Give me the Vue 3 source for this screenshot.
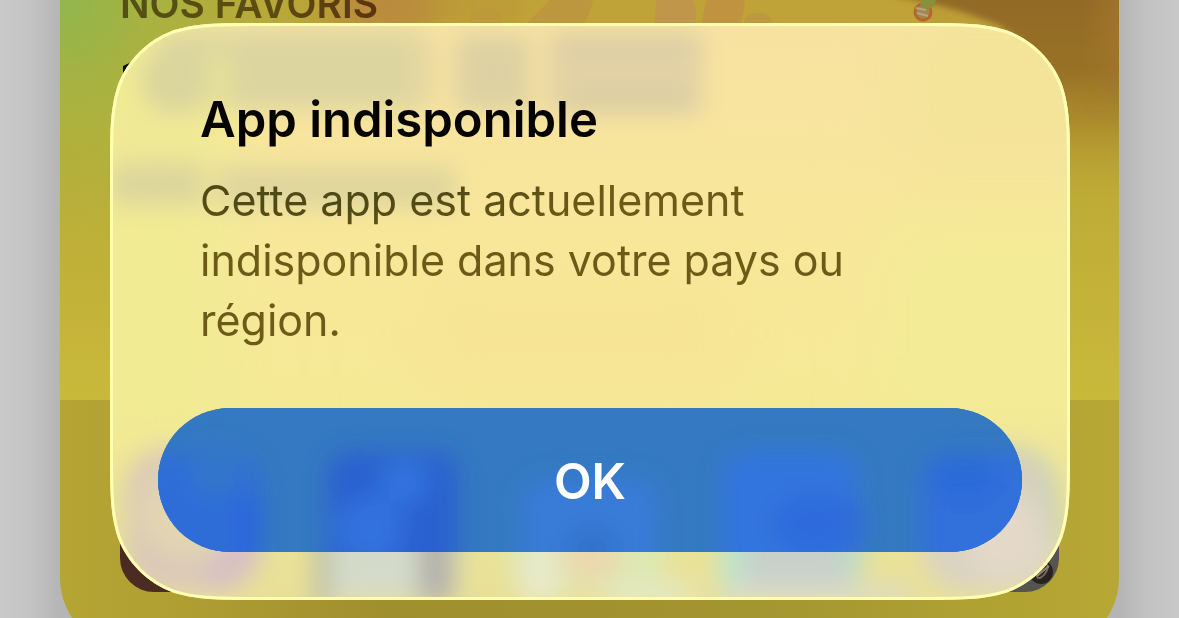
<template>
  <main class="screen">
    <section class="card">
      <div class="hero">
        <svg class="hero-art" viewBox="0 0 1059 400" preserveAspectRatio="none" aria-hidden="true">
          <defs>
            <linearGradient id="heroBase" x1="0" y1="0" x2="0" y2="1">
              <stop offset="0" stop-color="#bc9d37" />
              <stop offset="0.4" stop-color="#bda936" />
              <stop offset="1" stop-color="#c9b93b" />
            </linearGradient>
            <radialGradient id="heroGreen" gradientUnits="userSpaceOnUse" cx="0" cy="0" r="330">
              <stop offset="0" stop-color="#90b64e" />
              <stop offset="0.3" stop-color="#a7b441" stop-opacity="0.9" />
              <stop offset="1" stop-color="#bdb437" stop-opacity="0" />
            </radialGradient>
            <linearGradient id="heroDark" gradientUnits="userSpaceOnUse" x1="0" y1="0" x2="0" y2="200">
              <stop offset="0" stop-color="#926a26" />
              <stop offset="0.35" stop-color="#987128" />
              <stop offset="0.6" stop-color="#a68429" stop-opacity="0.8" />
              <stop offset="1" stop-color="#bba434" stop-opacity="0" />
            </linearGradient>
            <filter id="soft" x="-50%" y="-50%" width="200%" height="200%">
              <feGaussianBlur stdDeviation="16" />
            </filter>
            <filter id="edge" x="-30%" y="-30%" width="160%" height="160%">
              <feGaussianBlur stdDeviation="3" />
            </filter>
          </defs>
          <rect width="1059" height="400" fill="url(#heroBase)" />
          <rect width="420" height="400" fill="url(#heroGreen)" />
          <ellipse cx="325" cy="6" rx="56" ry="30" fill="#b98a3c" filter="url(#soft)" />
          <path d="M460 -10H860V30H460Z" fill="#bfa238" filter="url(#edge)" />
          <path d="M500 -10L533 -6Q534 12 518 30H460Z" fill="#bd973e" />
          <path d="M597 -6H630Q638 10 636 30H594Z" fill="#c0964a" />
          <path d="M648 -6H684Q686 14 678 30H640Z" fill="#bf933f" />
          <ellipse cx="698" cy="22" rx="14" ry="9" fill="#be983f" />
          <ellipse cx="426" cy="18" rx="16" ry="10" fill="#bd9939" />
          <path d="M836 -4Q900 8 940 26L960 40V200H1080V-20H850Z" fill="url(#heroDark)" filter="url(#edge)" />
          <ellipse cx="1064" cy="30" rx="20" ry="60" fill="#a47629" filter="url(#soft)" />
          <ellipse cx="863" cy="12" rx="8" ry="8" fill="#a08a48" stroke="#b9652e" stroke-width="3" />
          <path d="M863 -4H877L874 6Q868 12 860 6Z" fill="#88903a" />
          <path d="M857 13L868 16M856 8L866 10" stroke="#b9a18a" stroke-width="2" />
          <path d="M63 66L80 58V90H63Z" fill="#090700" />
        </svg>
        <p class="eyebrow">NOS FAVORIS</p>
      </div>
      <div class="shelf">
        <span v-for="name in apps" :key="name" class="app-icon" :class="name">
          <svg v-if="name === 'wheel'" viewBox="0 0 144 144" aria-hidden="true">
            <circle cx="126" cy="124" r="12" fill="#29231f" />
            <ellipse cx="127" cy="123" rx="4" ry="8" fill="none" stroke="#75675c" stroke-width="2" transform="rotate(35 127 123)" />
            <path d="M122 128L134 118" stroke="#91837a" stroke-width="2" />
          </svg>
        </span>
      </div>
    </section>

    <section class="alert" role="alertdialog" aria-labelledby="alert-title" aria-describedby="alert-text">
      <svg class="glass" viewBox="0 0 960 577" preserveAspectRatio="none" aria-hidden="true">
        <defs>
          <linearGradient id="glassBase" x1="0" y1="0" x2="0" y2="1">
            <stop offset="0" stop-color="#f8e2a2" />
            <stop offset="0.35" stop-color="#f8e79a" />
            <stop offset="0.65" stop-color="#f5e996" />
            <stop offset="0.8" stop-color="#ebe596" />
            <stop offset="1" stop-color="#e8e098" />
          </linearGradient>
          <filter id="blurBig" x="-50%" y="-50%" width="200%" height="200%">
            <feGaussianBlur stdDeviation="32" />
          </filter>
          <filter id="blurMid" x="-30%" y="-50%" width="160%" height="200%">
            <feGaussianBlur stdDeviation="12" />
          </filter>
          <clipPath id="glassClip">
            <path :d="shape" />
          </clipPath>
        </defs>
        <g clip-path="url(#glassClip)">
          <rect width="960" height="577" fill="url(#glassBase)" />
          <g filter="url(#blurBig)">
            <rect x="-80" y="-20" width="200" height="440" fill="#f1eb94" />
            <rect x="780" y="200" width="260" height="200" fill="#f3eb96" />
            <rect x="780" y="-30" width="240" height="190" fill="#f4e49a" />
            <rect x="300" y="250" width="330" height="120" fill="#f7e595" />
          </g>
          <g filter="url(#blurMid)">
            <rect x="50" y="8" width="260" height="78" fill="#dcd5a0" />
            <circle cx="64" cy="58" r="34" fill="#d9d59d" />
            <path d="M8 84Q30 142 92 122" fill="none" stroke="#efe996" stroke-width="32" />
            <path d="M104 30Q118 60 100 94" fill="none" stroke="#e8e397" stroke-width="20" />
            <rect x="300" y="14" width="24" height="70" fill="#e4d7a1" />
            <rect x="346" y="12" width="74" height="76" fill="#ddd1a3" />
            <rect x="438" y="12" width="154" height="78" fill="#e2d2a5" />
            <rect x="0" y="140" width="94" height="42" fill="#dbd59d" />
            <rect x="106" y="144" width="240" height="40" fill="#ded59e" />
            <rect x="445" y="14" width="145" height="10" fill="#d0c6a6" />
            <rect x="455" y="72" width="130" height="16" fill="#d6cba3" />
          </g>
          <g filter="url(#blurMid)">
            <rect x="16" y="426" width="136" height="142" rx="40" fill="#dac8b9" />
            <circle cx="76" cy="490" r="46" fill="#e2d5b2" />
            <path d="M144 460Q150 520 100 564" fill="none" stroke="#d4bbcb" stroke-width="18" />
            <rect x="206" y="426" width="142" height="150" rx="24" fill="#d4dac9" />
            <path d="M326 430V580" stroke="#b3b1aa" stroke-width="34" />
            <path d="M212 500V590" stroke="#bcbda2" stroke-width="16" />
            <rect x="400" y="430" width="154" height="140" rx="24" fill="#dce8b2" />
            <ellipse cx="430" cy="550" rx="20" ry="36" fill="#e7eacb" />
            <ellipse cx="480" cy="530" rx="32" ry="34" fill="#ebd9ac" />
            <ellipse cx="540" cy="572" rx="50" ry="14" fill="#e5e9c2" />
            <rect x="612" y="426" width="140" height="142" rx="30" fill="#c8d0ca" />
            <path d="M622 490V564" stroke="#b9e6cf" stroke-width="22" />
            <path d="M752 490L738 556" stroke="#bbdbca" stroke-width="20" />
            <rect x="610" y="562" width="190" height="20" fill="#dddcc6" />
            <rect x="812" y="424" width="136" height="144" rx="44" fill="#dad3c2" />
            <ellipse cx="896" cy="516" rx="40" ry="40" fill="#e4d9c9" />
            <path d="M900 430Q944 440 944 520" fill="none" stroke="#c9d0ba" stroke-width="18" />
          </g>
          <path :d="shape" fill="none" stroke="#fffeb2" stroke-width="6" />
        </g>
      </svg>

      <div class="copy">
        <h1 id="alert-title">App indisponible</h1>
        <p id="alert-text">Cette app est actuellement indisponible dans votre pays ou région.</p>
      </div>
      <button class="ok" type="button">
        <svg class="ok-tint" viewBox="0 0 864 144" preserveAspectRatio="none" aria-hidden="true">
          <rect width="864" height="144" fill="#3479c1" />
          <g filter="url(#blurMid)">
            <rect x="-30" y="46" width="132" height="130" rx="30" fill="#2d6dd8" />
            <circle cx="58" cy="62" r="26" fill="#3376cb" />
            <path d="M92 90V150" stroke="#2a62e0" stroke-width="18" />
            <rect x="170" y="44" width="130" height="130" rx="20" fill="#2961cf" />
            <ellipse cx="246" cy="74" rx="24" ry="22" fill="#3274e0" />
            <ellipse cx="212" cy="122" rx="34" ry="34" fill="#3172de" />
            <rect x="364" y="70" width="136" height="110" rx="24" fill="#377cd8" />
            <ellipse cx="434" cy="140" rx="26" ry="20" fill="#3172c8" />
            <rect x="564" y="44" width="136" height="130" rx="24" fill="#3275de" />
            <ellipse cx="660" cy="116" rx="46" ry="30" fill="#2e6adc" />
            <rect x="764" y="46" width="140" height="130" rx="24" fill="#3070dc" />
            <ellipse cx="806" cy="70" rx="34" ry="24" fill="#2c6ad8" />
          </g>
        </svg>
        <span class="ok-label">OK</span>
      </button>
    </section>
  </main>
</template>

<script setup>
const apps = ["brown", "slate", "lime", "aqua", "wheel"];

// continuous rounded corners for the glass panel
function smoothRect(w, h, r) {
  const a = 1.5287 * r;
  const b = 1.0885 * r;
  const c = 0.8684 * r;
  const d = 0.6315 * r;
  const e = 0.0749 * r;
  const f = 0.3728 * r;
  const g = 0.1691 * r;
  return [
    `M${a} 0H${w - a}`,
    `C${w - b} 0 ${w - c} 0 ${w - d} ${e}`,
    `C${w - f} ${g} ${w - g} ${f} ${w - e} ${d}`,
    `C${w} ${c} ${w} ${b} ${w} ${a}`,
    `V${h - a}`,
    `C${w} ${h - b} ${w} ${h - c} ${w - e} ${h - d}`,
    `C${w - g} ${h - f} ${w - f} ${h - g} ${w - d} ${h - e}`,
    `C${w - c} ${h} ${w - b} ${h} ${w - a} ${h}`,
    `H${a}`,
    `C${b} ${h} ${c} ${h} ${d} ${h - e}`,
    `C${f} ${h - g} ${g} ${h - f} ${e} ${h - d}`,
    `C0 ${h - c} 0 ${h - b} 0 ${h - a}`,
    `V${a}`,
    `C0 ${b} 0 ${c} ${e} ${d}`,
    `C${g} ${f} ${f} ${g} ${d} ${e}`,
    `C${c} 0 ${b} 0 ${a} 0Z`,
  ].join("");
}

const shape = smoothRect(960, 577, 100);
</script>

<style>
body {
  background: #c8c8c8;
}
</style>

<style scoped>
.screen {
  position: relative;
  height: 100vh;
  padding: 0 60px;
  box-sizing: border-box;
  overflow: hidden;
  font-family: Inter, "Liberation Sans", sans-serif;
  background: linear-gradient(90deg, #c9c9c9, #c4c4c4 30px, #b5b5b5 60px, #b5b5b5 calc(100% - 60px), #c3c3c3 calc(100% - 30px), #c8c8c8);
}

.card {
  border-radius: 0 0 72px 72px;
  overflow: hidden;
}

.hero {
  display: grid;
  height: 400px;
}

.hero-art,
.eyebrow {
  grid-area: 1 / 1;
}

.hero-art {
  width: 100%;
  height: 400px;
}

.eyebrow {
  z-index: 1;
  margin: -16px 60px 0;
  font-size: 39px;
  line-height: 40px;
  font-weight: 600;
  color: transparent;
  background: linear-gradient(90deg, #535016, #5c4c12 150px, #5b3410 260px);
  background-clip: text;
}

.shelf {
  display: flex;
  justify-content: space-between;
  padding: 48px 60px 58px;
  background: linear-gradient(90deg, #b5a535, #b0a033 10%, #a08f2d 30%, #a39530 65%, #b1a333 90%, #b7a835);
}

.app-icon {
  width: 144px;
  height: 144px;
  border-radius: 34px;
  overflow: hidden;
}

.app-icon svg {
  display: block;
}

.brown {
  background: #4b2c22;
}

.slate {
  background: #59636b;
}

.lime {
  background: #a7bd58;
}

.aqua {
  background: #6da1a0;
}

.wheel {
  background: #555451;
}

.alert {
  position: absolute;
  top: 23px;
  left: 110px;
  right: 109px;
  display: flex;
  flex-direction: column;
  gap: 58px;
  padding: 67px 48px 48px;
}

.glass {
  position: absolute;
  inset: 0;
  width: 100%;
  height: 100%;
}

.copy {
  position: relative;
  padding: 0 42px;
}

h1 {
  margin: 0 0 20px;
  font-size: 49px;
  line-height: 60px;
  font-weight: 600;
  color: #050300;
}

.copy p {
  margin: 0;
  font-size: 43px;
  line-height: 60px;
  color: transparent;
  background: radial-gradient(300px 70px at 120px 10px, #4f4916 40%, #6c5a18);
  background-clip: text;
}

.ok {
  position: relative;
  height: 144px;
  padding: 2px 0 0;
  border: 0;
  border-radius: 72px;
  overflow: hidden;
  font: inherit;
  font-size: 49px;
  font-weight: 600;
  color: #fff;
  background: #3479c1;
  cursor: pointer;
}

.ok-tint {
  position: absolute;
  inset: 0;
  width: 100%;
  height: 100%;
}

.ok-label {
  position: relative;
}
</style>
